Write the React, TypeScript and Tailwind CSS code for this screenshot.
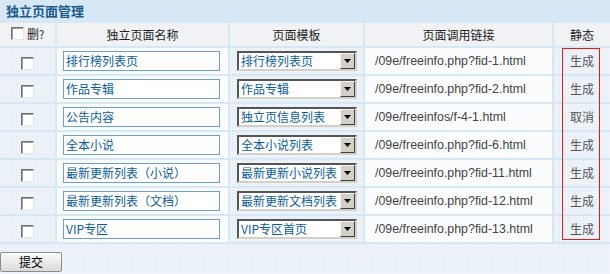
import React from "react";

const rows = [
  { name: "排行榜列表页", tpl: "排行榜列表页", link: "/09e/freeinfo.php?fid-1.html", st: "生成" },
  { name: "作品专辑", tpl: "作品专辑", link: "/09e/freeinfo.php?fid-2.html", st: "生成" },
  { name: "公告内容", tpl: "独立页信息列表", link: "/09e/freeinfos/f-4-1.html", st: "取消" },
  { name: "全本小说", tpl: "全本小说列表", link: "/09e/freeinfo.php?fid-6.html", st: "生成" },
  { name: "最新更新列表（小说）", tpl: "最新更新小说列表", link: "/09e/freeinfo.php?fid-11.html", st: "生成" },
  { name: "最新更新列表（文档）", tpl: "最新更新文档列表", link: "/09e/freeinfo.php?fid-12.html", st: "生成" },
  { name: "VIP专区", tpl: "VIP专区首页", link: "/09e/freeinfo.php?fid-13.html", st: "生成" },
];

const cjk = "font-['SimSun','Noto_Sans_CJK_SC',sans-serif]";

function Check() {
  return (
    <span className="inline-block w-[13px] h-[13px] border border-t-[#707070] border-l-[#707070] border-b-[#e6e6e6] border-r-[#e6e6e6] bg-white shadow-[inset_1px_1px_0_#a0a0a0] align-middle" />
  );
}

function FakeSelect({ text }: { text: string }) {
  return (
    <div className="flex items-center w-[120px] h-[20px] border-2 border-t-[#555] border-l-[#555] border-b-[#d4d0c8] border-r-[#d4d0c8] bg-white">
      <span className="flex-1 overflow-hidden whitespace-nowrap text-[12px] leading-[16px] text-[#0b5c9e] pl-[2px]">
        {text}
      </span>
      <span className="w-[15px] h-[16px] bg-[#d4d0c8] border border-t-[#f4f4f4] border-l-[#f4f4f4] border-b-[#404040] border-r-[#404040] flex items-center justify-center shrink-0">
        <svg width="7" height="4" viewBox="0 0 7 4">
          <path d="M0 0h7L3.5 4z" fill="#000" />
        </svg>
      </span>
    </div>
  );
}

export default function App() {
  const tex =
    "bg-[#edf3f9] bg-[radial-gradient(#dbe7f2_1px,transparent_1px)] bg-[length:3px_3px]";
  return (
    <div className={`relative w-[610px] h-[274px] overflow-hidden ${tex} ${cjk}`}>
      <div className="h-[21px] bg-[#d6e7f5] flex items-center pl-[6px] text-[13px] font-bold text-[#1b5a8c]">
        独立页面管理
      </div>
      <table className="w-[610px] table-fixed border-collapse border-y-2 border-[#d6e7f5]">
        <colgroup>
          <col className="w-[56px]" />
          <col className="w-[173px]" />
          <col className="w-[135px]" />
          <col className="w-[189px]" />
          <col />
        </colgroup>
        <thead>
          <tr className="h-[25px] text-[12px] text-[#222] bg-[#f1f2f4]">
            <th className="font-normal border-2 border-l-0 border-[#d6e7f5] text-left pl-[11px]">
              <span className="inline-flex items-center gap-[3px]">
                <Check />
                <span>删<span className="text-[11px]">?</span></span>
              </span>
            </th>
            <th className="font-normal border-2 border-[#d6e7f5]">独立页面名称</th>
            <th className="font-normal border-2 border-[#d6e7f5]">页面模板</th>
            <th className="font-normal border-2 border-[#d6e7f5]">页面调用链接</th>
            <th className="font-normal border-2 border-r-0 border-[#d6e7f5]">静态</th>
          </tr>
        </thead>
        <tbody>
          {rows.map((r, i) => (
            <tr key={i} className="h-[28px]">
              <td className="border-2 border-l-0 border-[#d6e7f5] text-center">
                <Check />
              </td>
              <td className="border-2 border-[#d6e7f5] bg-[#fafcfe] pl-[6px]">
                <div className="w-[157px] h-[20px] border border-[#6e9fd3] bg-white text-[12px] leading-[18px] text-[#0b5c9e] pl-[2px] whitespace-nowrap overflow-hidden">
                  {r.name}
                </div>
              </td>
              <td className="border-2 border-[#d6e7f5] pl-[7px]">
                <FakeSelect text={r.tpl} />
              </td>
              <td className="border-2 border-[#d6e7f5] bg-[#fafcfe] pl-[10px] text-[12.4px] text-[#444] font-['Liberation_Sans',Arial,sans-serif] whitespace-nowrap">
                {r.link}
              </td>
              <td className="border-2 border-r-0 border-[#d6e7f5] text-center text-[12px] text-[#555]">
                {r.st}
              </td>
            </tr>
          ))}
        </tbody>
      </table>
      <button className="mt-[8px] w-[62px] h-[20px] border border-[#8c8c8c] rounded-[2px] bg-gradient-to-b from-[#fbfbfb] to-[#dadada] text-[12px] text-black flex items-center justify-center">
        提交
      </button>
      <div className="absolute left-[562px] top-[48px] w-[38px] h-[192px] border border-[#e41b1b] pointer-events-none" />
    </div>
  );
}
